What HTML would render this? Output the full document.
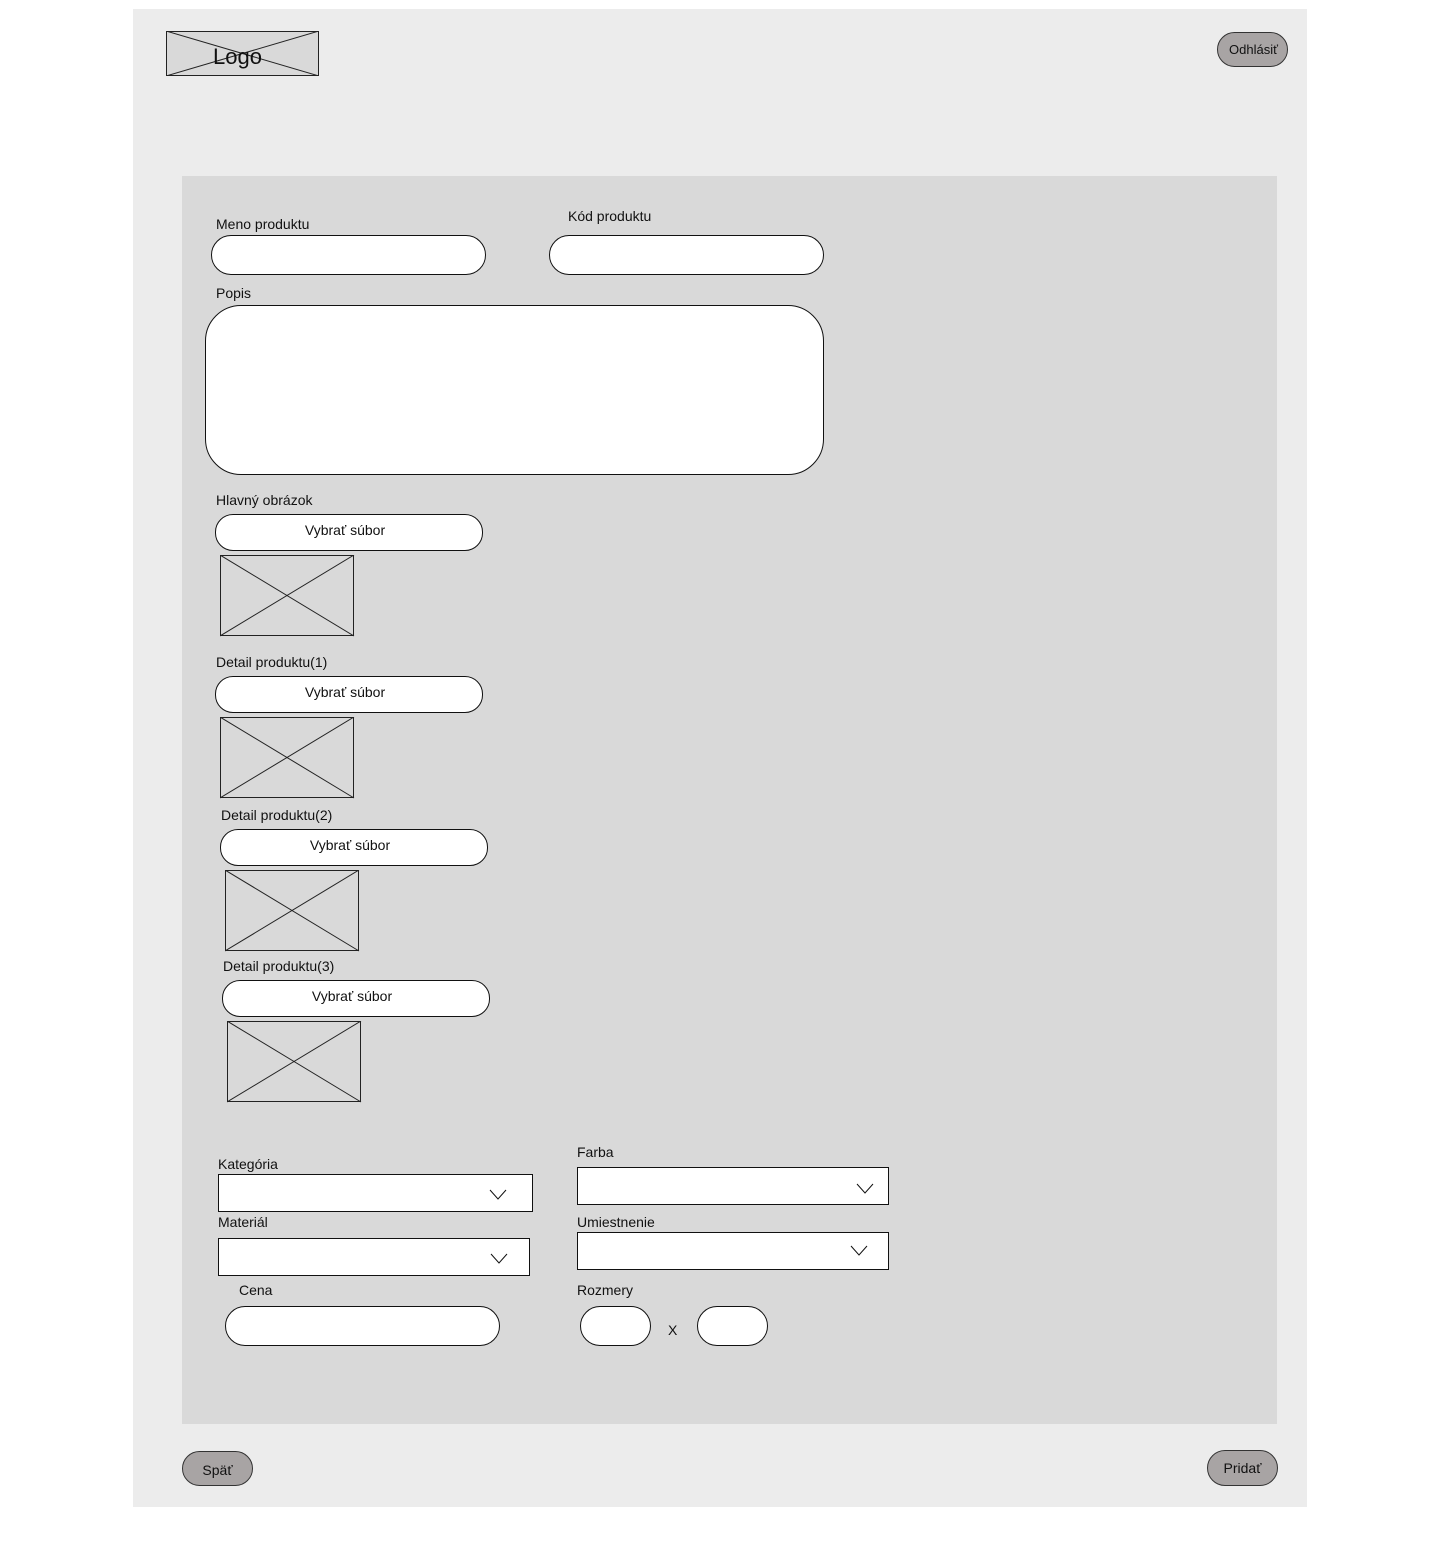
<!DOCTYPE html>
<html><head><meta charset="utf-8"><style>
*{box-sizing:border-box;margin:0;padding:0}
body{width:1440px;height:1552px;background:#fff;font-family:"Liberation Sans",sans-serif;color:#111;position:relative;overflow:hidden}
.a{position:absolute}
.bg{left:133px;top:9px;width:1174px;height:1498px;background:#ececec}
.panel{left:182px;top:176px;width:1095px;height:1248px;background:#d9d9d9}
.lbl{font-size:14px;color:#111;white-space:nowrap}
.in{background:#fff;border:1px solid #111;border-radius:20px}
.btn{background:#fff;border:1px solid #111;border-radius:18px;font-size:14px;text-align:center;line-height:31px;padding-right:8px}
.sel{background:#fff;border:1px solid #111}
.gb{background:#a8a4a4;border:1px solid #333;border-radius:18px;font-size:14px;text-align:center}
svg{display:block}
</style></head><body>
<div class="a bg"></div>
<svg class="a" style="left:166px;top:31px" width="153" height="45"><rect x="0.5" y="0.5" width="152" height="44" fill="#d9d9d9" stroke="#222"/><line x1="0" y1="0" x2="153" y2="45" stroke="#222"/><line x1="153" y1="0" x2="0" y2="45" stroke="#222"/></svg>
<div class="a" style="left:166px;top:44px;width:143px;text-align:center;font-size:22px">Logo</div>
<div class="a gb" style="left:1217px;top:32px;width:71px;height:35px;line-height:33px;font-size:13px;padding-left:2px">Odhlásiť</div>
<div class="a panel"></div>

<div class="a lbl" style="left:216px;top:216px">Meno produktu</div>
<div class="a in" style="left:211px;top:235px;width:275px;height:40px"></div>
<div class="a lbl" style="left:568px;top:208px">Kód produktu</div>
<div class="a in" style="left:549px;top:235px;width:275px;height:40px"></div>
<div class="a lbl" style="left:216px;top:285px">Popis</div>
<div class="a in" style="left:205px;top:305px;width:619px;height:170px;border-radius:36px"></div>

<div class="a lbl" style="left:216px;top:492px">Hlavný obrázok</div>
<div class="a btn" style="left:215px;top:514px;width:268px;height:37px">Vybrať súbor</div>
<svg class="a" style="left:220px;top:555px" width="135" height="82"><rect x="0.5" y="0.5" width="133" height="80" fill="#d9d9d9" stroke="#222"/><line x1="0" y1="0" x2="134" y2="81" stroke="#222"/><line x1="134" y1="0" x2="0" y2="81" stroke="#222"/></svg>

<div class="a lbl" style="left:216px;top:654px">Detail produktu(1)</div>
<div class="a btn" style="left:215px;top:676px;width:268px;height:37px">Vybrať súbor</div>
<svg class="a" style="left:220px;top:717px" width="135" height="82"><rect x="0.5" y="0.5" width="133" height="80" fill="#d9d9d9" stroke="#222"/><line x1="0" y1="0" x2="134" y2="81" stroke="#222"/><line x1="134" y1="0" x2="0" y2="81" stroke="#222"/></svg>

<div class="a lbl" style="left:221px;top:807px">Detail produktu(2)</div>
<div class="a btn" style="left:220px;top:829px;width:268px;height:37px">Vybrať súbor</div>
<svg class="a" style="left:225px;top:870px" width="135" height="82"><rect x="0.5" y="0.5" width="133" height="80" fill="#d9d9d9" stroke="#222"/><line x1="0" y1="0" x2="134" y2="81" stroke="#222"/><line x1="134" y1="0" x2="0" y2="81" stroke="#222"/></svg>

<div class="a lbl" style="left:223px;top:958px">Detail produktu(3)</div>
<div class="a btn" style="left:222px;top:980px;width:268px;height:37px">Vybrať súbor</div>
<svg class="a" style="left:227px;top:1021px" width="135" height="82"><rect x="0.5" y="0.5" width="133" height="80" fill="#d9d9d9" stroke="#222"/><line x1="0" y1="0" x2="134" y2="81" stroke="#222"/><line x1="134" y1="0" x2="0" y2="81" stroke="#222"/></svg>

<div class="a lbl" style="left:218px;top:1156px">Kategória</div>
<div class="a sel" style="left:218px;top:1174px;width:315px;height:38px"></div>
<svg class="a" style="left:489px;top:1189px" width="18" height="11"><polyline points="1,1 9,10 17,1" fill="none" stroke="#111"/></svg>
<div class="a lbl" style="left:218px;top:1214px">Materiál</div>
<div class="a sel" style="left:218px;top:1238px;width:312px;height:38px"></div>
<svg class="a" style="left:490px;top:1253px" width="18" height="11"><polyline points="1,1 9,10 17,1" fill="none" stroke="#111"/></svg>
<div class="a lbl" style="left:239px;top:1282px">Cena</div>
<div class="a in" style="left:225px;top:1306px;width:275px;height:40px"></div>

<div class="a lbl" style="left:577px;top:1144px">Farba</div>
<div class="a sel" style="left:577px;top:1167px;width:312px;height:38px"></div>
<svg class="a" style="left:856px;top:1183px" width="18" height="11"><polyline points="1,1 9,10 17,1" fill="none" stroke="#111"/></svg>
<div class="a lbl" style="left:577px;top:1214px">Umiestnenie</div>
<div class="a sel" style="left:577px;top:1232px;width:312px;height:38px"></div>
<svg class="a" style="left:850px;top:1245px" width="18" height="11"><polyline points="1,1 9,10 17,1" fill="none" stroke="#111"/></svg>
<div class="a lbl" style="left:577px;top:1282px">Rozmery</div>
<div class="a in" style="left:580px;top:1306px;width:71px;height:40px"></div>
<div class="a lbl" style="left:668px;top:1322px">X</div>
<div class="a in" style="left:697px;top:1306px;width:71px;height:40px"></div>

<div class="a gb" style="left:182px;top:1451px;width:71px;height:35px;line-height:37px">Späť</div>
<div class="a gb" style="left:1207px;top:1450px;width:71px;height:36px;line-height:34px">Pridať</div>
</body></html>
